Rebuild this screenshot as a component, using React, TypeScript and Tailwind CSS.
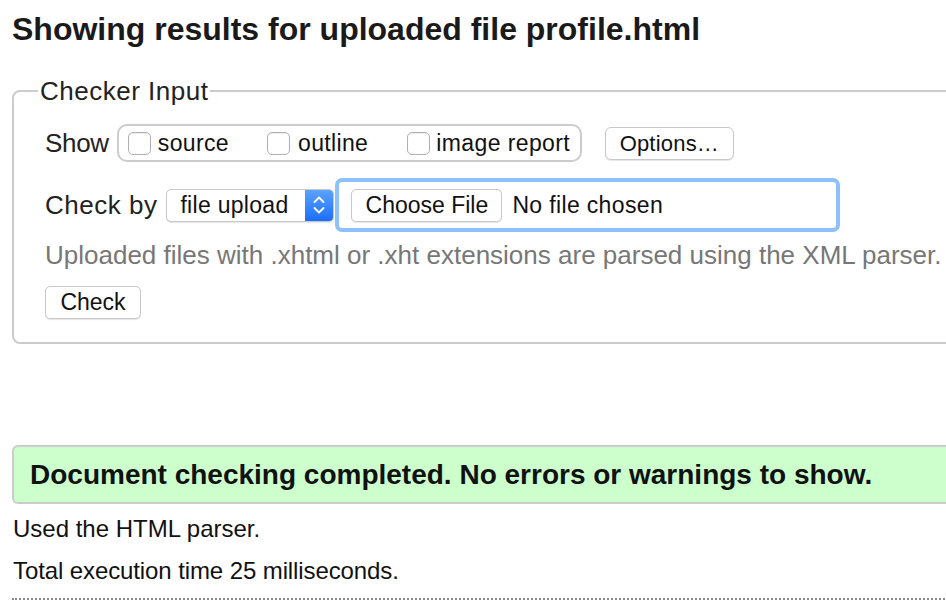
import React from "react";

const F = { fontFamily: '"Liberation Sans", Arial, sans-serif' };

function Box() {
  return <span className="block flex-none w-[23px] h-[23px] rounded-[5px] border border-[#b0b0b0] bg-white shadow-[inset_0_1px_1px_rgba(0,0,0,0.08)]" />;
}

export default function App() {
  return (
    <div className="w-[946px] h-[600px] overflow-hidden bg-white text-[#111]" style={F}>
      <div className="pl-[12px] pt-[11px]">
        <h1 className="text-[32px] font-bold leading-[36px] text-[#1a1a1a] whitespace-nowrap">
          Showing results for uploaded file profile.html
        </h1>
        <fieldset className="mt-[29px] w-[980px] border-2 border-[#cccccc] rounded-[8px] pl-[31px] pt-[17px] pb-[23px]">
          <legend className="-ml-[7px] px-[2px] text-[26px] leading-[30px] tracking-[0.5px] text-[#222]">Checker Input</legend>
          <div className="flex items-center h-[40px]">
            <span className="text-[26px] tracking-[-0.3px] text-[#222]">Show</span>
            <div className="ml-[8px] flex items-center h-[38px] w-[465px] border-2 border-[#cccccc] rounded-[10px] pl-[9px]">
              <Box />
              <span className="ml-[7px] text-[23px] tracking-[0.35px]">source</span>
              <span className="ml-[38px] flex"><Box /></span>
              <span className="ml-[8px] text-[23px] tracking-[0.35px]">outline</span>
              <span className="ml-[39px] flex"><Box /></span>
              <span className="ml-[6px] text-[23px] tracking-[0.4px]">image report</span>
            </div>
            <button className="ml-[23px] h-[33px] w-[129px] border border-[#c8c8c8] rounded-[6px] bg-white text-[22px] leading-[31px] tracking-[0.2px] text-[#111] shadow-[0_1px_1px_rgba(0,0,0,0.1)]">
              Options…
            </button>
          </div>
          <div className="flex items-center mt-[15px] h-[54px]">
            <span className="text-[26px] tracking-[0.5px] text-[#222]">Check by</span>
            <div className="ml-[9px] flex h-[33px] w-[168px] border border-[#c8c8c8] rounded-[5px] overflow-hidden bg-white shadow-[0_1px_1px_rgba(0,0,0,0.1)]">
              <span className="flex-1 pl-[13px] text-[23px] leading-[31px] tracking-[0.3px]">file upload</span>
              <span className="w-[28px] flex items-center justify-center bg-gradient-to-b from-[#5aa2fe] to-[#1a6dfa]">
                <svg width="12" height="24" viewBox="0 0 12 24" fill="none" stroke="white" strokeWidth="1.8" strokeLinecap="round" strokeLinejoin="round">
                  <path d="M1.5 9 L6 4.5 L10.5 9" />
                  <path d="M1.5 15 L6 19.5 L10.5 15" />
                </svg>
              </span>
            </div>
            <div className="ml-[1px] flex items-center h-[54px] w-[505px] border-[4px] border-[#8ec1fa] rounded-[7px] pl-[12px] bg-white">
              <button className="h-[33px] w-[151px] border border-[#c8c8c8] rounded-[5px] bg-white text-[23px] leading-[31px] text-[#111] shadow-[0_1px_1px_rgba(0,0,0,0.1)]">
                Choose File
              </button>
              <span className="ml-[10px] text-[23px] tracking-[0.35px] text-[#111]">No file chosen</span>
            </div>
          </div>
          <p className="mt-[8px] text-[26px] leading-[30px] text-[#777] whitespace-nowrap">
            Uploaded files with .xhtml or .xht extensions are parsed using the XML parser.
          </p>
          <button className="block mt-[16px] h-[33px] w-[96px] border border-[#c8c8c8] rounded-[5px] bg-white text-[23px] leading-[31px] text-[#111] shadow-[0_1px_1px_rgba(0,0,0,0.1)]">
            Check
          </button>
        </fieldset>
        <div className="mt-[101px] w-[980px] h-[59px] border-2 border-[#cccccc] rounded-[6px] bg-[#ccffcc] flex items-center pl-[16px]">
          <span className="text-[28px] font-bold text-[#111] whitespace-nowrap">
            Document checking completed. No errors or warnings to show.
          </span>
        </div>
        <p className="mt-[10px] pl-[1px] text-[24px] leading-[30px] text-[#111]">Used the HTML parser.</p>
        <p className="mt-[12px] pl-[1px] text-[24px] leading-[30px] tracking-[-0.1px] text-[#111]">Total execution time 25 milliseconds.</p>
        <div className="mt-[12px] w-[980px] border-t-2 border-dotted border-[#888]" />
      </div>
    </div>
  );
}
